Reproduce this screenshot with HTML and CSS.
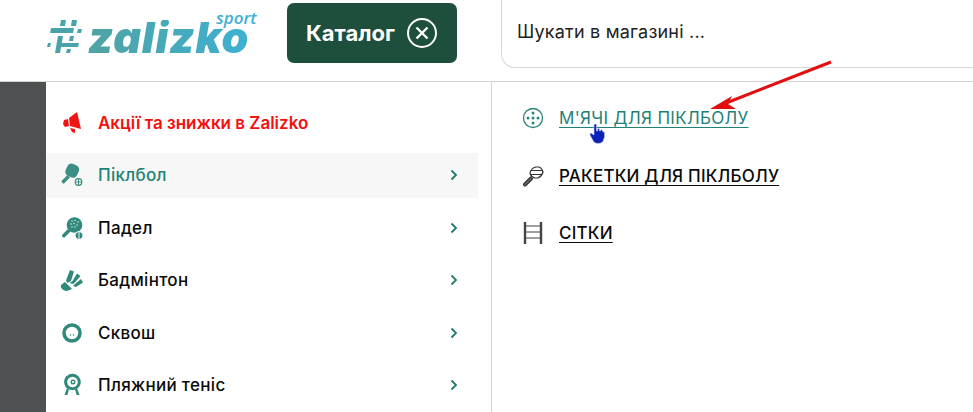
FILE: index.html
```html
<!DOCTYPE html>
<html lang="uk">
<head>
  <meta charset="UTF-8">
  <title>Zalizko Sport</title>
  <link rel="stylesheet" href="styles.css">
</head>
<body>
  <header class="header">
    <a class="logo">
      <svg class="logo-hash" width="36" height="34" viewBox="0 0 36 34">
        <g fill="#4aa3a8">
          <polygon points="15,0 20,0 19,6 14,6"/>
          <polygon points="26,0 31,0 30,6 25,6"/>
          <polygon points="5,8 28,8 27,13 4,13"/>
          <polygon points="32,9 36,9 35,13 31,13"/>
          <polygon points="12,16 17,16 14,33 9,33"/>
          <polygon points="24,16 28,16 27,21 23,21"/>
          <polygon points="15,23 33,23 32,27 14,27"/>
          <polygon points="2,23 5,23 4,27 1,27"/>
          <polygon points="21,29 25,29 24,33 20,33"/>
        </g>
      </svg>
      <span class="logo-name">zalizko</span>
      <span class="logo-sport">sport</span>
    </a>
    <button class="catalog-btn">
      <span>Каталог</span>
      <svg width="32" height="32" viewBox="0 0 32 32" fill="none" stroke="#fff">
        <circle cx="16" cy="16" r="14" stroke-width="2"/>
        <path d="M10.500 10.500l11 11M21.500 10.500l-11 11" stroke-width="2.400"/>
      </svg>
    </button>
    <div class="search">Шукати в магазині ...</div>
  </header>

  <div class="main">
    <div class="backdrop"></div>
    <nav class="menu">
      <a class="menu-item promo">
        <svg class="menu-icon" width="24" height="24" viewBox="0 0 24 24" fill="#f01414">
          <polygon points="9,7 17,1 21,18 10,15"/>
          <polygon points="4,9 8,8 9,15 5,16 3,13"/>
          <polygon points="10,17 15,18 15,22 12,21"/>
        </svg>
        <span>Акції та знижки в Zalizko</span>
      </a>
      <a class="menu-item active">
        <svg class="menu-icon" width="24" height="24" viewBox="0 0 24 24">
          <rect x="6" y="1" width="12.500" height="13" rx="4.500" transform="rotate(25 12 7.500)" fill="#3b8f83"/>
          <path d="M7.500 12l2.500 2.500-5.500 5.500q-1 1-2 0l-.5-.5q-1-1 0-2z" fill="#3b8f83"/>
          <circle cx="18.500" cy="19" r="3.300" fill="none" stroke="#3b8f83" stroke-width="1.200"/>
          <path d="M18.500 16v6M15.500 19h6" stroke="#3b8f83" stroke-width="1"/>
        </svg>
        <span>Піклбол</span>
        <svg class="chevron" width="8" height="12" viewBox="0 0 8 12"><path d="M1.500 1.500L6 6l-4.500 4.500" fill="none" stroke="#1e7a6c" stroke-width="1.800"/></svg>
      </a>
      <a class="menu-item">
        <svg class="menu-icon" width="24" height="24" viewBox="0 0 24 24">
          <circle cx="14.500" cy="9" r="7.800" fill="#2f8a7c"/>
          <path d="M8 13l2.500 2.500-5.500 5.500q-1 1-2.500 0q-1-1 0-2.500z" fill="#2f8a7c"/>
          <g fill="#cfe6e1">
            <circle cx="12" cy="5" r=".8"/><circle cx="15" cy="4.500" r=".8"/><circle cx="18" cy="6" r=".8"/>
            <circle cx="11" cy="8" r=".8"/><circle cx="14" cy="7.500" r=".8"/><circle cx="17" cy="9" r=".8"/>
            <circle cx="12" cy="11" r=".8"/><circle cx="15" cy="11" r=".8"/>
          </g>
          <circle cx="19" cy="19.500" r="4" fill="#2f8a7c" stroke="#fff"/>
          <path d="M19 15.500v8" stroke="#fff" stroke-width=".9"/>
        </svg>
        <span>Падел</span>
        <svg class="chevron" width="8" height="12" viewBox="0 0 8 12"><path d="M1.500 1.500L6 6l-4.500 4.500" fill="none" stroke="#1e7a6c" stroke-width="1.800"/></svg>
      </a>
      <a class="menu-item">
        <svg class="menu-icon" width="24" height="24" viewBox="0 0 24 24">
          <path d="M5 14l7 7-5 2q-3 0-5-2t-1-4z" fill="#2f8a7c"/>
          <path d="M6 12.500L10 2l4 1.500-3 9.500-3.500 2zM9.500 15l3-2 4.500-7.500 3.500 2.500-7 8zM13 18l2-2 6-5 2 3.500-7 4.500z" fill="#2f8a7c"/>
        </svg>
        <span>Бадмінтон</span>
        <svg class="chevron" width="8" height="12" viewBox="0 0 8 12"><path d="M1.500 1.500L6 6l-4.500 4.500" fill="none" stroke="#1e7a6c" stroke-width="1.800"/></svg>
      </a>
      <a class="menu-item">
        <svg class="menu-icon" width="24" height="24" viewBox="0 0 24 24">
          <circle cx="12" cy="12" r="8" fill="#fff" stroke="#2f8a7c" stroke-width="3.500"/>
          <circle cx="10.500" cy="14" r=".8" fill="#2f8a7c"/>
          <circle cx="13.500" cy="14" r=".8" fill="#2f8a7c"/>
        </svg>
        <span>Сквош</span>
        <svg class="chevron" width="8" height="12" viewBox="0 0 8 12"><path d="M1.500 1.500L6 6l-4.500 4.500" fill="none" stroke="#1e7a6c" stroke-width="1.800"/></svg>
      </a>
      <a class="menu-item">
        <svg class="menu-icon" width="24" height="24" viewBox="0 0 24 24">
          <circle cx="12.500" cy="9" r="6.800" fill="none" stroke="#2f8a7c" stroke-width="3"/>
          <path d="M7 3.500q-3 5 0 11" fill="none" stroke="#2f8a7c" stroke-width="2"/>
          <circle cx="13" cy="9" r="1.800" fill="none" stroke="#2f8a7c" stroke-width="1.400"/>
          <path d="M7 15l-2.500 7h3L9 16zM17 15l2.500 7h-3L15 16z" fill="#2f8a7c"/>
        </svg>
        <span>Пляжний теніс</span>
        <svg class="chevron" width="8" height="12" viewBox="0 0 8 12"><path d="M1.500 1.500L6 6l-4.500 4.500" fill="none" stroke="#1e7a6c" stroke-width="1.800"/></svg>
      </a>
    </nav>
    <div class="submenu">
      <a class="sub-item current">
        <svg width="22" height="22" viewBox="0 0 22 22" fill="#2a8577">
          <circle cx="11" cy="11" r="9.500" fill="none" stroke="#2a8577" stroke-width="1.300"/>
          <circle cx="11" cy="6" r="1.500"/><circle cx="6" cy="11" r="1.500"/><circle cx="11" cy="11" r="1.500"/>
          <circle cx="16" cy="11" r="1.500"/><circle cx="11" cy="16" r="1.500"/>
        </svg>
        <span>М'ЯЧІ ДЛЯ ПІКЛБОЛУ</span>
      </a>
      <a class="sub-item">
        <svg width="22" height="22" viewBox="0 0 22 22" fill="none" stroke="#333" stroke-width="1.200">
          <path d="M8 8q1-5 6-6h3q3 1 4 5-1 4-5 6h-3q-4-1-5-5z"/>
          <path d="M9 5.500h11M9 9.500h11" stroke-width="1.100"/>
          <path d="M8.500 12l2 2L4 20.500q-1 1-2 0t0-2z" fill="#666"/>
        </svg>
        <span>РАКЕТКИ ДЛЯ ПІКЛБОЛУ</span>
      </a>
      <a class="sub-item">
        <svg width="22" height="22" viewBox="0 0 22 22" fill="none" stroke="#444">
          <path d="M3 0v22M19 0v22" stroke-width="2.400"/>
          <path d="M3 4h16M3 10h16M3 16h16" stroke-width="1.200"/>
        </svg>
        <span>СІТКИ</span>
      </a>
    </div>
  </div>

  <svg class="arrow" width="126" height="50" viewBox="0 0 126 50">
    <path d="M122 2L12 45" stroke="#e01010" stroke-width="3" fill="none"/>
    <polygon points="1,49 23,36 19,44 27,49" fill="#e01010"/>
  </svg>
  <svg class="hand" width="18" height="22" viewBox="0 0 18 22">
    <path d="M5 1.500q1.500-1 2.500 0V8h1V6q1.500-1 2 0v2h1V7q1.500-.8 2 .5v1h.5q1.500 0 1.500 1.500v4l-1.500 4.500q-2 2-5 2q-3 0-4.500-2L1 12q-.5-1.500 1-2l3 2z" fill="#0a22b8" stroke="#c9cde8" stroke-width=".6"/>
  </svg>
</body>
</html>
```
FILE: styles.css
```css
body {
  margin: 0;
  font-family: 'Inter', sans-serif;
  background: #fff;
  color: #0b0b0b;
  height: 412px;
  overflow: hidden;
  position: relative;
}
a {
  text-decoration: none;
}
.header {
  display: flex;
  align-items: flex-start;
  height: 81px;
  border-bottom: 1px solid #d4d6d6;
}
.logo {
  position: relative;
  display: flex;
  align-items: center;
  width: 214px;
  height: 34px;
  margin: 20px 0 0 46px;
  gap: 6px;
}
.logo-hash {
  flex: none;
}
.logo-name {
  font-family: 'Inter', sans-serif;
  font-weight: 900;
  font-style: italic;
  font-size: 43px;
  letter-spacing: .9px;
  line-height: 34px;
  background: linear-gradient(90deg, #4fa3a3, #3fb0d2);
  -webkit-background-clip: text;
  background-clip: text;
  color: transparent;
}
.logo-sport {
  position: absolute;
  left: 170px;
  top: -10px;
  font-family: 'Open Sans', sans-serif;
  font-weight: 600;
  font-style: italic;
  font-size: 17px;
  line-height: 16px;
  color: #3fb0d2;
}
.catalog-btn {
  display: flex;
  align-items: center;
  justify-content: center;
  gap: 11px;
  width: 170px;
  height: 60px;
  margin: 3px 0 0 27px;
  background: #1d4f3c;
  border: none;
  border-radius: 7px;
  color: #fff;
  font-family: 'Inter', sans-serif;
  font-size: 22px;
  font-weight: 700;
}
.search {
  flex: 1;
  height: 68px;
  margin: 0 0 0 44px;
  box-sizing: border-box;
  border: 1px solid #d4d8d8;
  border-top: none;
  border-right: none;
  border-bottom-left-radius: 14px;
  padding: 20px 15px 0;
  font-size: 18px;
  letter-spacing: .2px;
  line-height: 24px;
  color: #222;
}
.main {
  display: flex;
  height: 330px;
}
.backdrop {
  width: 46px;
  background: #4f5052;
}
.menu {
  width: 432px;
  padding-top: 18.500px;
  display: flex;
  flex-direction: column;
  gap: 8px;
}
.menu-item {
  display: flex;
  align-items: center;
  height: 44.500px;
  padding: 0 20px 0 14px;
  font-size: 17px;
  letter-spacing: .3px;
  font-weight: 500;
  color: #0b0b0b;
}
.menu-item span {
  flex: 1;
  margin-left: 14px;
}
.menu-icon {
  flex: none;
}
.promo {
  color: #f40f0f;
  font-weight: 600;
  letter-spacing: 0;
}
.active {
  background: #f7f7f7;
  color: #1f8275;
}
.submenu {
  margin-left: 13px;
  border-left: 1px solid #d4d6d6;
  padding: 25px 0 0 30px;
  display: flex;
  flex-direction: column;
  gap: 35.500px;
}
.sub-item {
  display: flex;
  align-items: center;
  height: 22px;
  gap: 15px;
  font-size: 17px;
  letter-spacing: .2px;
  font-weight: 500;
  color: #0b0b0b;
}
.sub-item span {
  text-decoration: underline;
  text-underline-offset: 3px;
}
.current {
  color: #1f8275;
  font-weight: 400;
  letter-spacing: .3px;
}
.arrow {
  position: absolute;
  left: 709px;
  top: 60px;
}
.hand {
  position: absolute;
  left: 589px;
  top: 123px;
}
```
